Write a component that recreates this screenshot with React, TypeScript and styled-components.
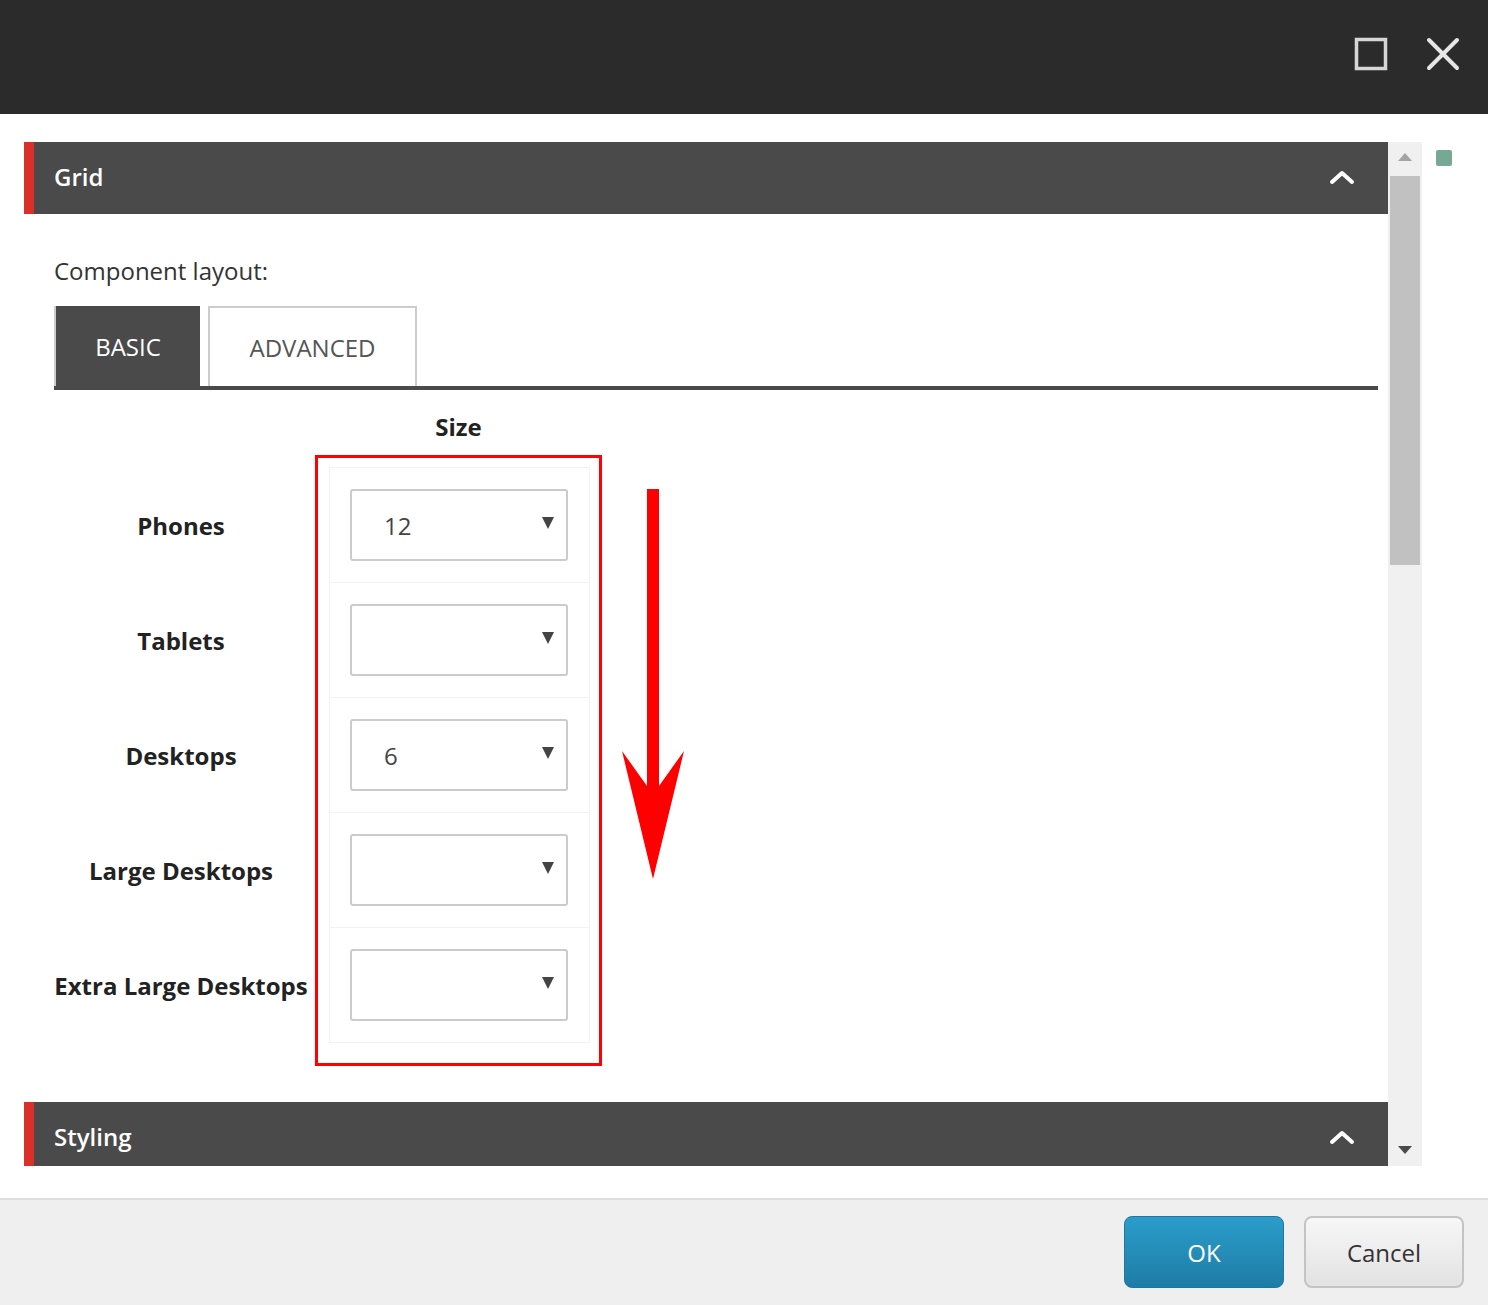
import React from "react";
import styled, { createGlobalStyle } from "styled-components";

const Global = createGlobalStyle`
  html, body { margin: 0; padding: 0; background: #fff; }
  body { font-family: "Open Sans", "Liberation Sans", sans-serif; }
  * { box-sizing: border-box; }
`;

const Page = styled.div`
  width: 1488px;
  height: 1305px;
  display: flex;
  flex-direction: column;
  overflow: hidden;
`;

const TopBar = styled.div`
  height: 114px;
  flex: none;
  background: #2b2b2b;
  display: flex;
  align-items: center;
  justify-content: flex-end;
  padding: 0 28px 6px 0;
  gap: 38px;
`;

const IconBtn = styled.div`
  width: 34px;
  height: 34px;
  display: flex;
  align-items: center;
  justify-content: center;
`;

const Body = styled.div`
  flex: 1;
  display: flex;
  padding: 28px 0 32px 24px;
  min-height: 0;
`;

const ScrollArea = styled.div`
  width: 1398px;
  display: flex;
  min-height: 0;
`;

const ScrollContent = styled.div`
  flex: 1;
  overflow: hidden;
`;

const Scrollbar = styled.div`
  width: 34px;
  background: #f0f0f0;
  display: flex;
  flex-direction: column;
  align-items: center;
  padding: 11px 0 12px;
`;

const Thumb = styled.div`
  width: 30px;
  height: 389px;
  background: #c1c1c1;
  margin-top: 15px;
`;

const Spacer = styled.div`
  flex: 1;
`;

const ArrowTri = styled.div<{ $down?: boolean }>`
  width: 0;
  height: 0;
  border-left: 7px solid transparent;
  border-right: 7px solid transparent;
  ${(p) =>
    p.$down
      ? "border-top: 8px solid #4a4a4a;"
      : "border-bottom: 8px solid #a3a3a3;"}
`;

const Side = styled.div`
  padding: 8px 0 0 14px;
`;

const GreenDot = styled.div`
  width: 16px;
  height: 16px;
  border-radius: 2px;
  background: #76a893;
`;

const SectionHeader = styled.div<{ $h: number }>`
  height: ${(p) => p.$h}px;
  background: #4a4a4a;
  border-left: 10px solid #d9302a;
  display: flex;
  align-items: center;
  justify-content: space-between;
  padding: 0 33px 3px 20px;
  color: #fff;
  font-size: 24px;
  font-weight: 600;
`;

const SectionBody = styled.div`
  padding: 41px 10px 36px 30px;
`;

const FieldLabel = styled.div`
  font-size: 24px;
  color: #333;
  line-height: 32px;
`;

const Tabs = styled.div`
  margin-top: 19px;
  display: flex;
  gap: 8px;
  border-bottom: 4px solid #4a4a4a;
`;

const Tab = styled.div<{ $active?: boolean }>`
  height: 80px;
  display: flex;
  align-items: center;
  justify-content: center;
  font-size: 24px;
  ${(p) =>
    p.$active
      ? `background:#4a4a4a;color:#fff;width:146px;border-left:2px solid #ccc;`
      : `background:#fff;color:#555;width:209px;border:2px solid #ccc;border-bottom:none;`}
`;

const GridArea = styled.div`
  display: flex;
  align-items: flex-start;
  margin-top: 22px;
`;

const LabelCol = styled.div`
  width: 254px;
  padding-top: 56px;
  margin-right: 7px;
  display: flex;
  flex-direction: column;
`;

const RowLabel = styled.div`
  height: 115px;
  display: flex;
  align-items: center;
  justify-content: center;
  font-size: 24px;
  font-weight: 700;
  color: #222;
  white-space: nowrap;
`;

const SizeCol = styled.div`
  display: flex;
  flex-direction: column;
`;

const SizeHead = styled.div`
  height: 43px;
  text-align: center;
  font-size: 24px;
  font-weight: 700;
  color: #222;
  line-height: 30px;
`;

const RedBox = styled.div`
  width: 287px;
  border: 3px solid #ff0000;
  padding: 9px 9px 20px 11px;
`;

const Cell = styled.div`
  height: 116px;
  border: 1px solid #f2f2f2;
  margin-top: -1px;
  display: flex;
  align-items: center;
  padding-left: 20px;
  &:first-child { margin-top: 0; }
`;

const Select = styled.div`
  width: 218px;
  height: 72px;
  border: 2px solid #cbcbcb;
  border-radius: 3px;
  display: flex;
  align-items: center;
  justify-content: space-between;
  padding: 0 12px 0 32px;
  font-size: 24px;
  color: #444;
`;

const Caret = styled.span`
  width: 0;
  height: 0;
  border-left: 6px solid transparent;
  border-right: 6px solid transparent;
  border-top: 12px solid #444;
  margin-top: -4px;
`;

const ArrowWrap = styled.div`
  margin: 77px 0 0 20px;
`;

const Footer = styled.div`
  height: 107px;
  flex: none;
  background: #efefef;
  border-top: 2px solid #dedede;
  display: flex;
  justify-content: flex-end;
  align-items: flex-start;
  padding: 16px 24px 0 0;
  gap: 20px;
`;

const Button = styled.div<{ $primary?: boolean }>`
  width: 160px;
  height: 72px;
  border-radius: 8px;
  display: flex;
  align-items: center;
  justify-content: center;
  font-size: 24px;
  ${(p) =>
    p.$primary
      ? `background: linear-gradient(#2b9dcb, #1e7ca5); color:#fff; border:1px solid #1d77a0;`
      : `background: linear-gradient(#f7f7f7, #e2e2e2); color:#333; border:2px solid #c4c4c4;`}
`;

const Chevron = () => (
  <svg width="26" height="16" viewBox="0 0 26 16">
    <polyline points="3,13 13,4 23,13" fill="none" stroke="#fff" strokeWidth="4" strokeLinecap="round" strokeLinejoin="round" />
  </svg>
);

const rows = [
  { label: "Phones", value: "12" },
  { label: "Tablets", value: "" },
  { label: "Desktops", value: "6" },
  { label: "Large Desktops", value: "" },
  { label: "Extra Large Desktops", value: "" },
];

export default function App() {
  return (
    <Page>
      <Global />
      <TopBar>
        <IconBtn>
          <svg width="34" height="34" viewBox="0 0 34 34">
            <rect x="2.5" y="2.5" width="29" height="29" fill="none" stroke="#d6d6d6" strokeWidth="3.5" />
          </svg>
        </IconBtn>
        <IconBtn>
          <svg width="34" height="34" viewBox="0 0 34 34">
            <path d="M3 3 L31 31 M31 3 L3 31" stroke="#e6e6e6" strokeWidth="4" strokeLinecap="round" />
          </svg>
        </IconBtn>
      </TopBar>
      <Body>
        <ScrollArea>
          <ScrollContent>
            <SectionHeader $h={72}>
              <span>Grid</span>
              <Chevron />
            </SectionHeader>
            <SectionBody>
              <FieldLabel>Component layout:</FieldLabel>
              <Tabs>
                <Tab $active>BASIC</Tab>
                <Tab>ADVANCED</Tab>
              </Tabs>
              <GridArea>
                <LabelCol>
                  {rows.map((r) => (
                    <RowLabel key={r.label}>{r.label}</RowLabel>
                  ))}
                </LabelCol>
                <SizeCol>
                  <SizeHead>Size</SizeHead>
                  <RedBox>
                    {rows.map((r) => (
                      <Cell key={r.label}>
                        <Select>
                          <span>{r.value}</span>
                          <Caret />
                        </Select>
                      </Cell>
                    ))}
                  </RedBox>
                </SizeCol>
                <ArrowWrap>
                  <svg width="62" height="390" viewBox="0 0 62 390">
                    <rect x="25" y="0" width="12" height="300" fill="#ff0000" />
                    <polygon points="0,262 25,297 37,297 62,262 31,390" fill="#ff0000" />
                  </svg>
                </ArrowWrap>
              </GridArea>
            </SectionBody>
            <SectionHeader $h={72}>
              <span>Styling</span>
              <Chevron />
            </SectionHeader>
          </ScrollContent>
          <Scrollbar>
            <ArrowTri />
            <Thumb />
            <Spacer />
            <ArrowTri $down />
          </Scrollbar>
        </ScrollArea>
        <Side>
          <GreenDot />
        </Side>
      </Body>
      <Footer>
        <Button $primary>OK</Button>
        <Button>Cancel</Button>
      </Footer>
    </Page>
  );
}
